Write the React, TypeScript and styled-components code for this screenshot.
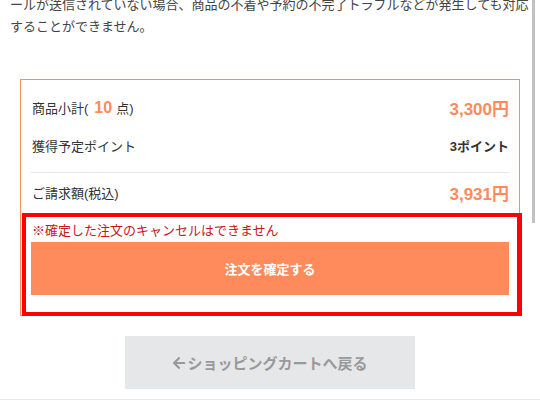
import styled, { createGlobalStyle } from 'styled-components'
import { FaArrowLeft } from 'react-icons/fa'

const GlobalStyle = createGlobalStyle`
  html, body {
    margin: 0;
    padding: 0;
    background: #fff;
    overflow: hidden;
  }
  body {
    font-family: "Liberation Sans", "Noto Sans CJK JP", sans-serif;
    color: #333;
  }
`

const Page = styled.div`
  position: relative;
  width: 540px;
  height: 409px;
  overflow: hidden;
`

const Lead = styled.p`
  margin: -6px 0 0;
  padding-left: 10px;
  font-size: 13px;
  line-height: 22px;
  color: #444;
  white-space: nowrap;
`

const Summary = styled.section`
  box-sizing: border-box;
  width: 500px;
  margin: 41px 0 0 20px;
  padding: 8px 10px 20px;
  border: 1px solid #fa8c62;
  background: #fff;
`

const Row = styled.div`
  display: flex;
  align-items: center;
  justify-content: space-between;
  height: 38px;
  padding: 0 0 0 1px;
`

const Label = styled.span`
  font-size: 13px;
  color: #333;
`

const Count = styled.b`
  margin: 0 4px 0 6px;
  font-size: 16px;
  color: #ff8a5c;
`

const Price = styled.span`
  font-size: 17px;
  font-weight: bold;
  color: #ff8a5c;
`

const Points = styled.span`
  font-size: 13px;
  font-weight: bold;
  color: #333;
`

const Divider = styled.hr`
  margin: 8px 0 0;
  border: 0;
  border-top: 1px solid #e6e6e6;
`

const Notice = styled.p`
  margin: 10px 0 0 1px;
  font-size: 13px;
  line-height: 20px;
  color: #c8161d;
`

const ConfirmButton = styled.button`
  display: block;
  width: 100%;
  height: 53px;
  margin-top: 1px;
  border: 0;
  background: #ff8a5c;
  color: #fff;
  font-family: inherit;
  font-size: 13px;
  font-weight: bold;
  cursor: pointer;
`

const BackButton = styled.button`
  display: flex;
  align-items: center;
  justify-content: center;
  gap: 1px;
  width: 290px;
  height: 53px;
  margin: 20px auto 0;
  border: 0;
  background: #e6e7e9;
  color: #999;
  font-family: inherit;
  font-size: 15px;
  font-weight: bold;
  cursor: pointer;
`

const FooterLine = styled.div`
  margin-top: 10px;
  border-top: 1px solid #e8e8e8;
`

const Highlight = styled.div`
  position: absolute;
  left: 22px;
  top: 213px;
  width: 500px;
  height: 103px;
  box-sizing: border-box;
  border: 4px solid #ff0000;
  border-right-width: 5px;
  pointer-events: none;
`

const ScrollThumb = styled.div`
  position: absolute;
  right: 5px;
  top: 0;
  width: 3px;
  height: 223px;
  background: #c1c1c1;
`

export default function App() {
  return (
    <Page>
      <GlobalStyle />
      <Lead>
        ールが送信されていない場合、商品の不着や予約の不完了トラブルなどが発生しても対応
        <br />
        することができません。
      </Lead>

      <Summary>
        <Row>
          <Label>
            商品小計(<Count>10</Count>点)
          </Label>
          <Price>3,300円</Price>
        </Row>
        <Row>
          <Label>獲得予定ポイント</Label>
          <Points>3ポイント</Points>
        </Row>
        <Divider />
        <Row>
          <Label>ご請求額(税込)</Label>
          <Price>3,931円</Price>
        </Row>
        <Notice>※確定した注文のキャンセルはできません</Notice>
        <ConfirmButton>注文を確定する</ConfirmButton>
      </Summary>

      <BackButton>
        <FaArrowLeft size={14} />
        ショッピングカートへ戻る
      </BackButton>
      <FooterLine />

      <Highlight />
      <ScrollThumb />
    </Page>
  )
}
